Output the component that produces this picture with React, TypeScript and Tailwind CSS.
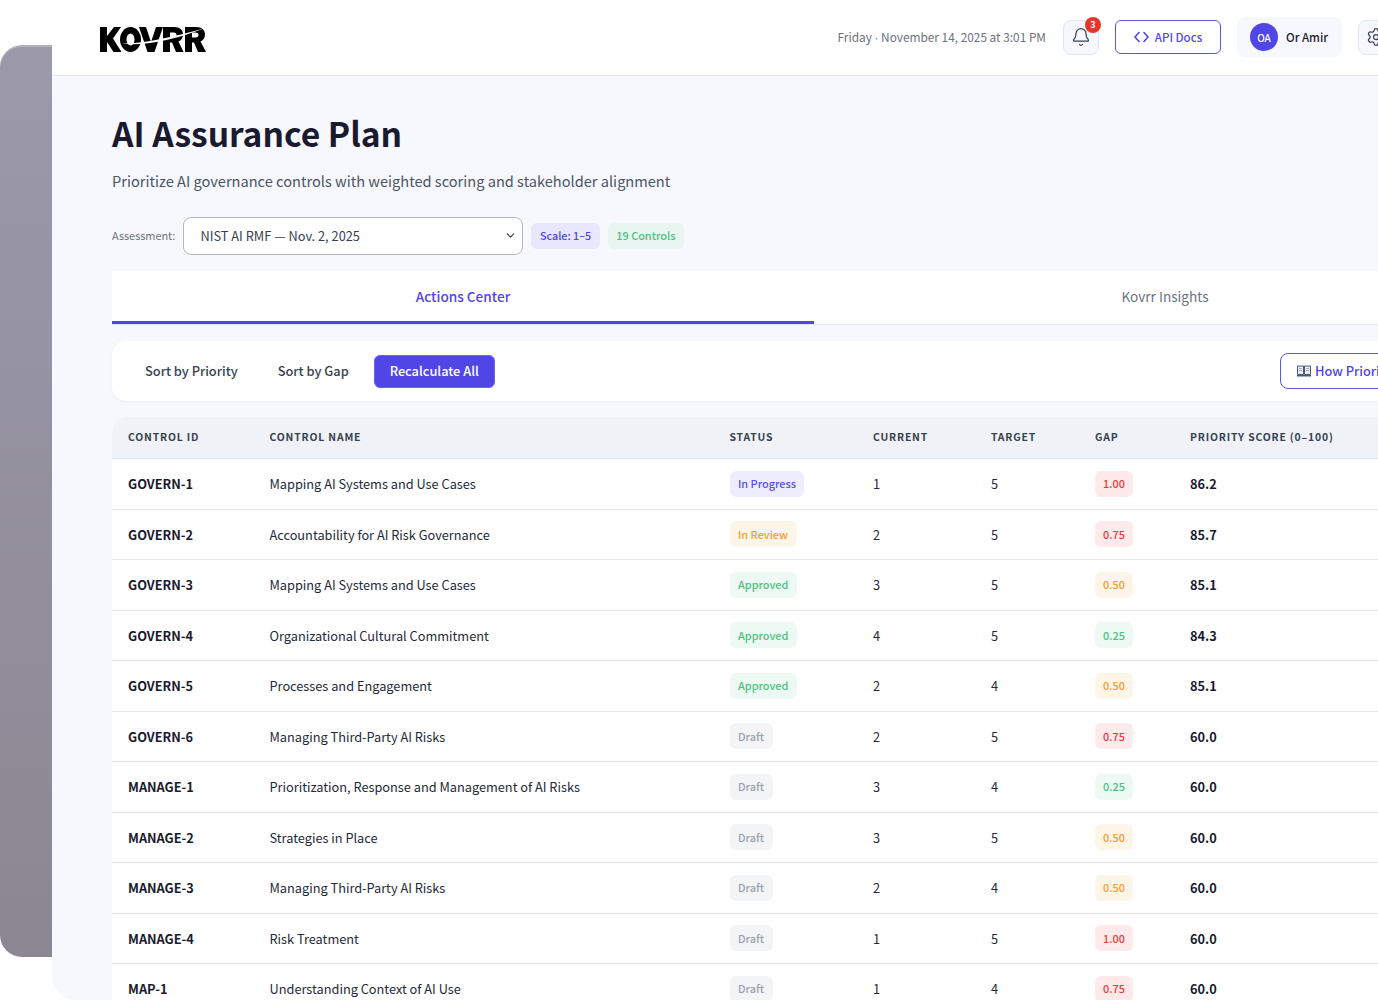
import React from "react";
import { Bell, ChevronDown, Settings } from "lucide-react";

type Row = {
  id: string;
  name: string;
  status: "In Progress" | "In Review" | "Approved" | "Draft";
  current: number;
  target: number;
  gap: string;
  score: string;
};

const rows: Row[] = [
  { id: "GOVERN-1", name: "Mapping AI Systems and Use Cases", status: "In Progress", current: 1, target: 5, gap: "1.00", score: "86.2" },
  { id: "GOVERN-2", name: "Accountability for AI Risk Governance", status: "In Review", current: 2, target: 5, gap: "0.75", score: "85.7" },
  { id: "GOVERN-3", name: "Mapping AI Systems and Use Cases", status: "Approved", current: 3, target: 5, gap: "0.50", score: "85.1" },
  { id: "GOVERN-4", name: "Organizational Cultural Commitment", status: "Approved", current: 4, target: 5, gap: "0.25", score: "84.3" },
  { id: "GOVERN-5", name: "Processes and Engagement", status: "Approved", current: 2, target: 4, gap: "0.50", score: "85.1" },
  { id: "GOVERN-6", name: "Managing Third-Party AI Risks", status: "Draft", current: 2, target: 5, gap: "0.75", score: "60.0" },
  { id: "MANAGE-1", name: "Prioritization, Response and Management of AI Risks", status: "Draft", current: 3, target: 4, gap: "0.25", score: "60.0" },
  { id: "MANAGE-2", name: "Strategies in Place", status: "Draft", current: 3, target: 5, gap: "0.50", score: "60.0" },
  { id: "MANAGE-3", name: "Managing Third-Party AI Risks", status: "Draft", current: 2, target: 4, gap: "0.50", score: "60.0" },
  { id: "MANAGE-4", name: "Risk Treatment", status: "Draft", current: 1, target: 5, gap: "1.00", score: "60.0" },
  { id: "MAP-1", name: "Understanding Context of AI Use", status: "Draft", current: 1, target: 4, gap: "0.75", score: "60.0" },
];

const statusStyles: Record<Row["status"], string> = {
  "In Progress": "bg-[#eeedfd] text-[#5850ec]",
  "In Review": "bg-[#fef5e9] text-[#f59e2c]",
  Approved: "bg-[#edf9f3] text-[#4cc27f]",
  Draft: "bg-[#f3f4f6] text-[#9ca3af]",
};

const gapStyles: Record<string, string> = {
  "1.00": "bg-[#feeaea] text-[#ef3a3a]",
  "0.75": "bg-[#feeaea] text-[#ef3a3a]",
  "0.50": "bg-[#fef5e9] text-[#f59e2c]",
  "0.25": "bg-[#edf9f3] text-[#4cc27f]",
};

const gridCols = "grid grid-cols-[141.5px_460px_143.5px_118px_104px_95px_342px] items-center";

const Logo = () => (
  <svg width="106" height="25" viewBox="0 0 106 25" className="block">
    {/* K */}
    <path d="M0 0h7v9l7-9h7l-8 11.500L21.500 25H13.500L7 15v10H0z" fill="#000" />
    {/* O */}
    <path d="M20 12.500a10.500 12.500 0 1 0 21 0a10.500 12.500 0 1 0-21 0zM26.500 12.500a4 6 0 1 1 8 0a4 6 0 1 1-8 0z" fill="#000" fillRule="evenodd" />
    {/* V */}
    <path d="M39 0h7l5 15 5-15h7l-8.500 25h-7z" fill="#000" />
    {/* R */}
    <path d="M63 0h11c6 0 9 3 9 7.500 0 3.500-2 6-4.500 7l5 10.500h-7.500l-4-9.500H70V25h-7zM70 5.500v5h3.500c2 0 3-1 3-2.500s-1-2.500-3-2.500z" fill="#000" fillRule="evenodd" />
    {/* R */}
    <path d="M85 0h11c6 0 9 3 9 7.500 0 3.500-2 6-4.500 7l5.500 10.500h-8l-4-9.500H92V25h-7zM92 5.500v5h3.500c2 0 3-1 3-2.500s-1-2.500-3-2.500z" fill="#000" fillRule="evenodd" />
    {/* swoosh cut */}
    <path d="M21 16.500C45 17 75 9 104 1.500 78 11.500 45 20 21 16.500z" fill="#fff" />
  </svg>
);

const BookIcon = () => (
  <svg width="14" height="12" viewBox="0 0 14 12" className="shrink-0">
    <path d="M0.500 1h6v8.500h-6zM7.500 1h6v8.500h-6z" fill="#e8ecf2" stroke="#4b5a70" strokeWidth="1" />
    <path d="M2 3.500h3M2 5.500h3M9 3.500h3M9 5.500h3" stroke="#8b97a8" strokeWidth="0.800" />
    <path d="M0 10h14v1.500H0z" fill="#4b5a70" />
  </svg>
);

export default function App() {
  return (
    <div className="h-[1000px] w-[1378px] overflow-hidden bg-white flex items-start font-['Noto_Sans_CJK_JP','Noto_Sans',sans-serif]">
      {/* window peeking out behind the app */}
      <div className="mt-[45px] h-[912px] w-[52px] shrink-0 rounded-l-[22px] border-t-2 border-[#b0afc4] bg-gradient-to-b from-[#9c99aa] to-[#8b8792]" />

      <div className="w-[1524px] shrink-0 h-[1000px] overflow-hidden rounded-bl-[24px] bg-[#f7f8fe]">
        <header className="h-[76px] bg-white border-b border-[#e4e6ef] flex items-center pl-[48px] pr-[182px]">
          <div className="mt-[3px]">
            <Logo />
          </div>
          <div className="ml-auto flex items-center -mt-[1px]">
            <span className="mt-[1px] text-[11.850px] text-[#6b7280]">
              Friday <span className="font-['Liberation_Sans']">·</span> November 14, 2025 at 3:01 PM
            </span>
            <button className="relative ml-[17px] w-[36px] h-[35px] rounded-[8px] border border-[#e1e5f4] bg-[#f7f8fe] flex items-center justify-center">
              <Bell size={20} strokeWidth={1.5} className="text-[#374151]" />
              <span className="absolute -top-[4px] -right-[3px] w-[16px] h-[16px] rounded-full bg-[#e8352c] text-white text-[9px] font-bold flex items-center justify-center leading-none">
                3
              </span>
            </button>
            <button className="ml-[16px] w-[106px] h-[34px] rounded-[6px] border-[1.5px] border-[#5b54ee] bg-white flex items-center justify-center gap-[6px] text-[11.500px] font-medium text-[#4f46e5]">
              <svg width="15" height="12" viewBox="0 0 15 12" fill="none" stroke="#4f46e5" strokeWidth="1.600" strokeLinecap="round" strokeLinejoin="round">
                <path d="M5 1.500 1 6l4 4.500M10 1.500 14 6l-4 4.500" />
              </svg>
              <span className="mt-[1px]">API Docs</span>
            </button>
            <div className="ml-[16px] w-[105px] h-[40px] rounded-[8px] bg-[#f7f8fe] flex items-center pl-[13px] gap-[8px]">
              <span className="w-[28px] h-[28px] rounded-full bg-[#4f46e5] text-white text-[10px] font-medium flex items-center justify-center">
                OA
              </span>
              <span className="mt-[1px] text-[11.500px] font-medium text-[#1a1a2e]">Or Amir</span>
            </div>
            <button className="ml-[16px] w-[36px] h-[35px] rounded-[8px] border border-[#e1e5f4] bg-[#f7f8fe] flex items-center justify-center">
              <Settings size={20} strokeWidth={1.5} className="text-[#374151]" />
            </button>
          </div>
        </header>

        <main className="pl-[60px] pr-[60px] pt-[32px]">
          <h1 className="text-[33.600px] leading-[50px] font-bold text-[#1a1a2e]">AI Assurance Plan</h1>
          <p className="mt-[10px] text-[14.600px] leading-[26px] text-[#4b5563]">
            Prioritize AI governance controls with weighted scoring and stakeholder alignment
          </p>

          <div className="mt-[23px] flex items-center h-[38px]">
            <span className="pb-[1px] text-[10.900px] text-[#6b7280]">Assessment:</span>
            <div className="relative ml-[8px]">
              <select className="appearance-none w-[340px] h-[38px] pl-[16px] rounded-[8px] border border-[#b4b7c3] bg-white text-[12.800px] text-[#374151]">
                <option>NIST AI RMF — Nov. 2, 2025</option>
              </select>
              <ChevronDown size={13} strokeWidth={2} className="absolute right-[6px] top-[12px] text-[#374151]" />
            </div>
            <span className="ml-[8px] h-[26px] pb-[1px] px-[8.500px] rounded-[6px] bg-[#e8e8fd] text-[10.800px] font-medium text-[#4f46e5] flex items-center">Scale: 1–5</span>
            <span className="ml-[8px] h-[26px] pb-[1px] px-[8.500px] rounded-[6px] bg-[#e8f5f0] text-[10.900px] font-medium text-[#4cc27f] flex items-center">19 Controls</span>
          </div>

          <div className="mt-[16px] grid grid-cols-2 h-[54px] bg-white border-b border-[#e4e6ef]">
            <div className="border-b-[3px] border-[#4f46e5] flex items-center justify-center text-[13.600px] font-medium text-[#4f46e5]">
              Actions Center
            </div>
            <div className="flex items-center justify-center pb-[3px] text-[13.600px] text-[#6b7280]">
              Kovrr Insights
            </div>
          </div>

          <div className="mt-[16px] h-[60px] bg-white rounded-[14px] shadow-[0_1px_2px_rgba(30,40,90,0.06)] flex items-center pl-[17px] pr-[16px]">
            <button className="px-[16px] text-[12.800px] font-medium text-[#374151]">Sort by Priority</button>
            <button className="ml-[8px] px-[16px] text-[12.800px] font-medium text-[#374151]">Sort by Gap</button>
            <button className="ml-[9px] w-[121px] h-[33px] rounded-[6px] bg-[#4f46e5] border border-[#6a62f0] text-[12.800px] font-medium text-white">Recalculate All</button>
            <button className="ml-auto w-[220px] h-[36px] rounded-[8px] border border-[#5b54ee] bg-white flex items-center pl-[16px] gap-[4px] text-[12.800px] font-medium text-[#4f46e5]">
              <BookIcon />
              How Priority Scoring Works
            </button>
          </div>

          <div className="mt-[16px] bg-white rounded-t-[16px] overflow-hidden">
            <div className={`${gridCols} h-[42px] pb-[1px] bg-[#eff2f7] border-b border-[#e2e6f0] text-[10.400px] font-bold tracking-[0.08em] text-[#374151]`}>
              <div className="pl-[16px]">CONTROL ID</div>
              <div className="pl-[16px]">CONTROL NAME</div>
              <div className="pl-[16px]">STATUS</div>
              <div className="pl-[16px]">CURRENT</div>
              <div className="pl-[16px]">TARGET</div>
              <div className="pl-[16px]">GAP</div>
              <div className="pl-[16px]">PRIORITY SCORE (0–100)</div>
            </div>
            {rows.map((row) => (
              <div key={row.id} className={`${gridCols} h-[50.500px] border-b border-[#e2e6f0] text-[12.750px] text-[#1f2937]`}>
                <div className="pl-[16px] font-bold text-[#1a1a2e]">{row.id}</div>
                <div className="pl-[16px]">{row.name}</div>
                <div className="pl-[16px]">
                  <span className={`inline-flex h-[26px] pb-[1px] items-center px-[8.500px] rounded-[6px] text-[10.900px] font-medium ${statusStyles[row.status]}`}>
                    {row.status}
                  </span>
                </div>
                <div className="pl-[16px]">{row.current}</div>
                <div className="pl-[16px]">{row.target}</div>
                <div className="pl-[15.500px]">
                  <span className={`inline-flex h-[26px] pb-[1px] items-center px-[8.500px] rounded-[6px] text-[10.900px] font-medium ${gapStyles[row.gap]}`}>
                    {row.gap}
                  </span>
                </div>
                <div className="pl-[16px] font-bold text-[#1a1a2e]">{row.score}</div>
              </div>
            ))}
          </div>
        </main>
      </div>
    </div>
  );
}
